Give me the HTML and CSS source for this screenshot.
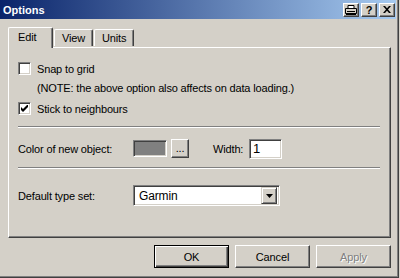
FILE: index.html
```html
<!DOCTYPE html>
<html lang="en">
<head>
    <meta charset="UTF-8">
    <title>Options</title>
    <link rel="stylesheet" href="styles.css">
</head>
<body>
    <div class="window">
        <div class="titlebar">
            <span class="title">Options</span>
            <div class="caption-buttons">
                <div class="cap">
                    <svg width="12" height="10" viewBox="0 0 12 10">
                        <path d="M3 0.5h6v3H3z" fill="#fff" stroke="#000"/>
                        <path d="M0.5 3.5h11v5H0.5z" fill="#d4d0c8" stroke="#000"/>
                        <path d="M2 6.5h8" stroke="#000"/>
                        <path d="M1 9.5h10" stroke="#000"/>
                    </svg>
                </div>
                <div class="cap help">?</div>
                <div class="cap">
                    <svg width="8" height="7" viewBox="0 0 8 7">
                        <path d="M0 0l2 0l2 2.2l2-2.2l2 0l-3 3.5l3 3.5l-2 0l-2-2.2l-2 2.2l-2 0l3-3.5z" fill="#000"/>
                    </svg>
                </div>
            </div>
        </div>

        <div class="tabs">
            <div class="tab active">Edit</div>
            <div class="tab">View</div>
            <div class="tab">Units</div>
        </div>

        <div class="panel">
            <div class="check">
                <span class="box"></span>
                <span>Snap to grid</span>
            </div>
            <div class="note">(NOTE: the above option also affects on data loading.)</div>
            <div class="check">
                <span class="box">
                    <svg width="7" height="7" viewBox="0 0 7 7">
                        <path d="M0 2v3l2 2l5-5v-3l-5 5z" fill="#000"/>
                    </svg>
                </span>
                <span>Stick to neighbours</span>
            </div>

            <div class="sep sep-first"></div>

            <div class="row row-color">
                <span class="label">Color of new object:</span>
                <span class="swatch"></span>
                <div class="btn small">...</div>
                <span class="width-label">Width:</span>
                <div class="field width-field">1</div>
            </div>

            <div class="sep sep-second"></div>

            <div class="row row-type">
                <span class="label">Default type set:</span>
                <div class="field select">
                    <span class="select-text">Garmin</span>
                    <div class="drop">
                        <svg width="7" height="4" viewBox="0 0 7 4">
                            <path d="M0 0h7l-3.5 4z" fill="#000"/>
                        </svg>
                    </div>
                </div>
            </div>
        </div>

        <div class="buttons">
            <div class="btn default">OK</div>
            <div class="btn">Cancel</div>
            <div class="btn disabled">Apply</div>
        </div>
    </div>
</body>
</html>
```

FILE: styles.css
```css
body {
    margin: 0;
    background-color: #d4d0c8;
    font-family: "Liberation Sans", Arial, sans-serif;
    font-size: 11px;
    letter-spacing: -0.15px;
    color: #000;
}
.window {
    width: 399px;
    height: 278px;
    box-sizing: border-box;
    background-color: #d4d0c8;
    border-right: 1px solid #404040;
    border-bottom: 1px solid #404040;
    box-shadow: inset -1px -1px #808080;
}
.titlebar {
    height: 19px;
    margin-right: 2px;
    display: flex;
    align-items: center;
    justify-content: space-between;
    background: linear-gradient(to right, #0a246a, #a6caf0);
}
.title {
    color: #fff;
    font-weight: bold;
    letter-spacing: 0;
    padding-left: 3px;
}
.caption-buttons {
    display: flex;
    gap: 2px;
    padding-right: 1px;
}
.cap {
    width: 16px;
    height: 14px;
    box-sizing: border-box;
    background-color: #d4d0c8;
    border: 1px solid;
    border-color: #fff #404040 #404040 #fff;
    box-shadow: inset -1px -1px #808080;
    display: flex;
    align-items: center;
    justify-content: center;
}
.help {
    font-weight: bold;
    font-size: 11px;
    line-height: 12px;
}
.tabs {
    height: 28px;
    display: flex;
    align-items: flex-end;
    padding-left: 8px;
}
.tab {
    height: 17px;
    box-sizing: border-box;
    border-top: 1px solid #fff;
    border-left: 1px solid #fff;
    border-right: 1px solid #404040;
    border-radius: 2px 2px 0 0;
    box-shadow: inset -1px 0 #808080;
    padding: 2px 7px 0 7px;
    margin-right: 1px;
    margin-bottom: 1px;
}
.tab.active {
    position: relative;
    z-index: 1;
    height: 21px;
    width: 45px;
    padding: 3px 0 0 9px;
    margin-bottom: -1px;
    background-color: #d4d0c8;
}
.panel {
    margin-left: 8px;
    width: 383px;
    height: 191px;
    box-sizing: border-box;
    border: 1px solid;
    border-color: #fff #404040 #404040 #fff;
    box-shadow: inset -1px -1px #808080;
    padding: 14px 10px 0 9px;
    display: flex;
    flex-direction: column;
}
.check {
    display: flex;
    align-items: center;
    gap: 6px;
    height: 13px;
}
.box {
    width: 13px;
    height: 13px;
    box-sizing: border-box;
    background-color: #fff;
    border: 1px solid;
    border-color: #808080 #fff #fff #808080;
    box-shadow: inset 1px 1px #404040, inset -1px -1px #d4d0c8;
    display: flex;
    align-items: center;
    justify-content: center;
}
.note {
    margin: 7px 0 7px 19px;
    height: 13px;
    line-height: 13px;
}
.sep {
    height: 1px;
    border-bottom: 1px solid #fff;
    background-color: #808080;
}
.sep-first {
    margin-top: 11px;
}
.row {
    display: flex;
    align-items: center;
}
.row-color {
    margin-top: 10px;
    height: 21px;
}
.sep-second {
    margin-top: 8px;
}
.row-type {
    margin-top: 16px;
    height: 21px;
}
.label {
    width: 115px;
}
.swatch {
    width: 34px;
    height: 17px;
    box-sizing: border-box;
    background-color: #808080;
    border: 1px solid;
    border-color: #808080 #fff #fff #808080;
    box-shadow: inset 1px 1px #404040, inset -1px -1px #d4d0c8;
}
.btn {
    width: 75px;
    height: 23px;
    box-sizing: border-box;
    background-color: #d4d0c8;
    border: 1px solid;
    border-color: #fff #404040 #404040 #fff;
    box-shadow: inset -1px -1px #808080;
    display: flex;
    align-items: center;
    justify-content: center;
}
.btn.small {
    width: 18px;
    height: 19px;
    margin-left: 4px;
    align-items: flex-end;
    padding-bottom: 3px;
}
.width-label {
    margin-left: 24px;
    width: 36px;
}
.field {
    height: 20px;
    box-sizing: border-box;
    background-color: #fff;
    border: 1px solid;
    border-color: #808080 #fff #fff #808080;
    box-shadow: inset 1px 1px #404040, inset -1px -1px #d4d0c8;
    display: flex;
    align-items: center;
    padding-left: 3px;
}
.width-field {
    width: 33px;
    font-size: 13px;
}
.select {
    width: 147px;
    height: 21px;
    justify-content: space-between;
    padding: 2px;
    padding-left: 5px;
    font-size: 12px;
}
.drop {
    width: 16px;
    height: 17px;
    box-sizing: border-box;
    background-color: #d4d0c8;
    border: 1px solid;
    border-color: #d4d0c8 #404040 #404040 #d4d0c8;
    box-shadow: inset 1px 1px #fff, inset -1px -1px #808080;
    display: flex;
    align-items: center;
    justify-content: center;
}
.buttons {
    display: flex;
    justify-content: flex-end;
    gap: 6px;
    margin-top: 7px;
    padding-right: 7px;
}
.btn.default {
    border: 1px solid #000;
    box-shadow: inset 1px 1px #fff, inset -1px -1px #404040, inset -2px -2px #808080;
}
.btn.disabled {
    color: #808080;
    text-shadow: 1px 1px #fff;
}
```
